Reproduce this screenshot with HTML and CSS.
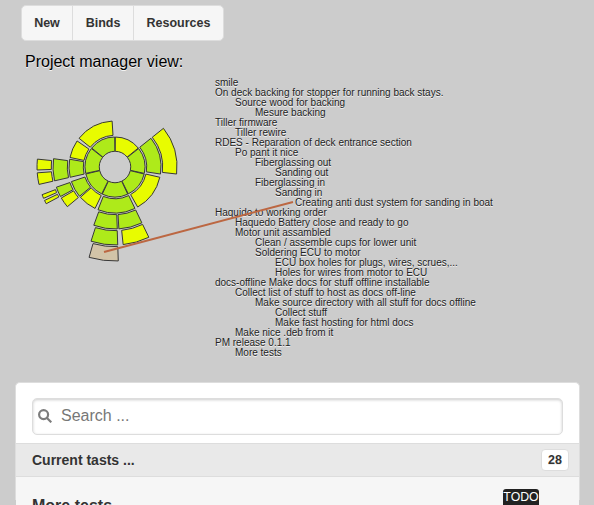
FILE: index.html
```html
<!DOCTYPE html>
<html lang="en">
<head>
<meta charset="utf-8">
<title>Project manager</title>
<link rel="stylesheet" href="styles.css">
</head>
<body>
<nav class="toolbar">
  <a class="tool tool-new">New</a>
  <a class="tool tool-binds">Binds</a>
  <a class="tool tool-resources">Resources</a>
</nav>
<h1 class="title">Project manager view:</h1>
<main class="overview">
  <svg class="chart" width="190" height="300" viewBox="0 78 190 300">
    <g id="segments" transform="translate(115 167)"></g>
    <path class="pointer" d="M104 252L293 202"/>
  </svg>
  <ul class="tree">
    <li>smile</li>
    <li>On deck backing for stopper for running back stays.</li>
    <li class="l1">Source wood for backing</li>
    <li class="l2">Mesure backing</li>
    <li>Tiller firmware</li>
    <li class="l1">Tiller rewire</li>
    <li>RDES - Reparation of deck entrance section</li>
    <li class="l1">Po pant it nice</li>
    <li class="l2">Fiberglassing out</li>
    <li class="l3">Sanding out</li>
    <li class="l2">Fiberglassing in</li>
    <li class="l3">Sanding in</li>
    <li class="l4">Creating anti dust system for sanding in boat</li>
    <li>Haquido to working order</li>
    <li class="l1">Haquedo Battery close and ready to go</li>
    <li class="l1">Motor unit assambled</li>
    <li class="l2">Clean / assemble cups for lower unit</li>
    <li class="l2">Soldering ECU to motor</li>
    <li class="l3">ECU box holes for plugs, wires, scrues,...</li>
    <li class="l3">Holes for wires from motor to ECU</li>
    <li>docs-offline Make docs for stuff offline installable</li>
    <li class="l1">Collect list of stuff to host as docs off-line</li>
    <li class="l2">Make source directory with all stuff for docs offline</li>
    <li class="l3">Collect stuff</li>
    <li class="l3">Make fast hosting for html docs</li>
    <li class="l1">Make nice .deb from it</li>
    <li>PM release 0.1.1</li>
    <li class="l1">More tests</li>
  </ul>
</main>
<section class="panel">
  <div class="search">
    <svg class="lens" width="14" height="14" viewBox="0 0 14 14"><circle cx="5.6" cy="5.6" r="4.5"/><path d="M9 9L13.3 13.3"/></svg>
    <span>Search ...</span>
  </div>
  <div class="divider"><span>Current tasts ...</span><span class="count">28</span></div>
  <div class="task"><span class="name">More tests</span><span class="status">TODO</span></div>
</section>
<script src="chart.js"></script>
</body>
</html>
```
FILE: styles.css
```css
* { box-sizing: border-box; }
html, body { height: 100%; }
body {
  margin: 0;
  padding: 5px 14px 0 15px;
  overflow: hidden;
  background: #ccc;
  color: #333;
  font-family: "Liberation Sans", Arial, sans-serif;
  font-size: 16px;
  text-shadow: 0 1px 0 #f3f3f3;
}
.toolbar {
  display: flex;
  width: 203px;
  height: 36px;
  margin-left: 6px;
  border: 1px solid #ddd;
  border-radius: 5px;
  background: #f6f6f6;
  font-size: 12.5px;
  font-weight: bold;
  line-height: 34px;
  text-align: center;
}
.tool + .tool { border-left: 1px solid #ddd; }
.tool-new { width: 50px; }
.tool-binds { width: 61px; }
.tool-resources { flex: 1; }
.title {
  margin: 11px 0 0 10px;
  color: #000;
  font-size: 16px;
  font-weight: normal;
  line-height: 20px;
}
.overview {
  display: flex;
  height: 300px;
  margin: 6px 0 0 -15px;
}
.chart {
  position: relative;
  z-index: 1;
  flex: none;
  overflow: visible;
}
.seg { stroke: #383838; stroke-width: 1; }
.todo { fill: #e8fc00; }
.open { fill: #aeea1a; }
.hover { fill: #d2c4a8; }
.pointer { stroke: #bc6742; stroke-width: 2; fill: none; }
.tree {
  margin: 0 0 0 25px;
  padding: 0;
  list-style: none;
  color: #222;
  font-size: 10px;
  line-height: 10px;
  white-space: nowrap;
}
.l1 { padding-left: 20px; }
.l2 { padding-left: 40px; }
.l3 { padding-left: 60px; }
.l4 { padding-left: 80px; }
.panel {
  height: 118px;
  margin-top: 4px;
  border: 1px solid #ddd;
  border-bottom: 0;
  border-radius: 5px 5px 0 0;
  background: #fff;
}
.search {
  display: flex;
  align-items: center;
  height: 37px;
  margin: 15px 16px 8px;
  padding: 0 0 2px 5px;
  gap: 9px;
  border: 1px solid #ddd;
  border-radius: 5px;
  box-shadow: inset 0 1px 3px rgba(0, 0, 0, .2);
  color: #777;
  text-shadow: none;
}
.lens { fill: none; stroke: #7c7c7c; stroke-width: 2.2; }
.divider {
  display: flex;
  align-items: center;
  justify-content: space-between;
  height: 34px;
  padding: 0 10px 0 16px;
  border: solid #ddd;
  border-width: 1px 0;
  background: #e9e9e9;
  font-size: 14px;
  font-weight: bold;
  text-shadow: 0 1px 0 #eee;
}
.count {
  width: 28px;
  height: 22px;
  border: 1px solid #ddd;
  border-radius: 4px;
  background: #fff;
  font-size: 12.5px;
  line-height: 20px;
  text-align: center;
}
.task {
  display: flex;
  justify-content: space-between;
  height: 28px;
  padding: 12px 40px 0 16px;
  background: #f6f6f6;
}
.name { padding-top: 8px; font-weight: bold; line-height: 18px; }
.status {
  width: 36px;
  height: 18px;
  border-radius: 3px;
  background: #222;
  color: #fff;
  font-size: 12.3px;
  line-height: 16px;
  text-align: center;
  text-shadow: none;
}
```
FILE: chart.js
```js
// Each segment: ring depth, start angle, end angle (clockwise from the top), state.
const segments = [
  [0, 0, 51.4, "todo"], [0, 51.4, 102.9, "open"], [0, 102.9, 154.3, "open"],
  [0, 154.3, 205.7, "open"], [0, 205.7, 257.1, "open"], [0, 257.1, 308.6, "open"],
  [0, 308.6, 360, "open"],
  [1, 51.4, 98.8, "open"], [2, 51.4, 96.5, "todo"],
  [1, 102.9, 150.5, "todo"],
  [1, 154.3, 201.7, "open"],
  [2, 154.3, 176.4, "open"], [2, 177.9, 200, "open"],
  [3, 154.3, 174, "todo"], [3, 178, 197.9, "open"], [4, 178, 196, "hover"],
  [1, 205.7, 228.8, "todo"], [1, 230.5, 251.5, "open"],
  [2, 230.2, 240, "todo"], [2, 241.6, 251, "open"],
  [3, 241.9, 244.6, "todo"], [3, 246.3, 249.2, "todo"],
  [1, 257.1, 279.7, "open"], [1, 282, 304.5, "todo"],
  [2, 257.1, 277.7, "open"],
  [3, 257.1, 265.7, "todo"], [3, 267.8, 275.8, "todo"],
  [1, 308.6, 356.4, "todo"]
];
const point = (r, deg) => {
  const a = deg * Math.PI / 180;
  return (r * Math.sin(a)).toFixed(2) + " " + (-r * Math.cos(a)).toFixed(2);
};
const group = document.getElementById("segments");
for (const [ring, start, end, state] of segments) {
  const inner = 15.7 + ring * 16;
  const outer = inner + 14.3;
  // Neighbours in the first ring are kept slightly apart.
  const from = start + 0.6 * (ring === 0);
  const to = end - 0.6 * (ring === 0);
  const path = document.createElementNS("http://www.w3.org/2000/svg", "path");
  path.setAttribute("class", "seg " + state);
  path.setAttribute("d", `M${point(inner, from)}A${inner} ${inner} 0 0 1 ${point(inner, to)}L${point(outer, to)}A${outer} ${outer} 0 0 0 ${point(outer, from)}Z`);
  group.appendChild(path);
}
```
